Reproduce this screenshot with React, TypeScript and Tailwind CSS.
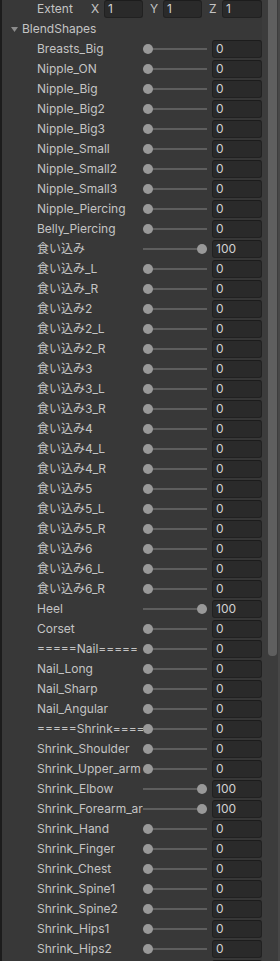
const shapes: [string, number][] = [
  ["Breasts_Big", 0],
  ["Nipple_ON", 0],
  ["Nipple_Big", 0],
  ["Nipple_Big2", 0],
  ["Nipple_Big3", 0],
  ["Nipple_Small", 0],
  ["Nipple_Small2", 0],
  ["Nipple_Small3", 0],
  ["Nipple_Piercing", 0],
  ["Belly_Piercing", 0],
  ["食い込み", 100],
  ["食い込み_L", 0],
  ["食い込み_R", 0],
  ["食い込み2", 0],
  ["食い込み2_L", 0],
  ["食い込み2_R", 0],
  ["食い込み3", 0],
  ["食い込み3_L", 0],
  ["食い込み3_R", 0],
  ["食い込み4", 0],
  ["食い込み4_L", 0],
  ["食い込み4_R", 0],
  ["食い込み5", 0],
  ["食い込み5_L", 0],
  ["食い込み5_R", 0],
  ["食い込み6", 0],
  ["食い込み6_L", 0],
  ["食い込み6_R", 0],
  ["Heel", 100],
  ["Corset", 0],
  ["=====Nail=====", 0],
  ["Nail_Long", 0],
  ["Nail_Sharp", 0],
  ["Nail_Angular", 0],
  ["=====Shrink=====", 0],
  ["Shrink_Shoulder", 0],
  ["Shrink_Upper_arm", 0],
  ["Shrink_Elbow", 100],
  ["Shrink_Forearm_ar", 100],
  ["Shrink_Hand", 0],
  ["Shrink_Finger", 0],
  ["Shrink_Chest", 0],
  ["Shrink_Spine1", 0],
  ["Shrink_Spine2", 0],
  ["Shrink_Hips1", 0],
  ["Shrink_Hips2", 0],
];

const font = { fontFamily: "Inter, 'Noto Sans CJK JP', sans-serif" };

function Field({ value, className }: { value: string; className: string }) {
  return (
    <div
      className={`h-[18px] rounded-[3px] bg-[#2a2a2a] border border-[#212121] border-t-[#1c1c1c] pl-[3px] text-[12px] leading-[16px] text-[#d2d2d2] overflow-hidden ${className}`}
    >
      {value}
    </div>
  );
}

function ShapeRow({ name, value }: { name: string; value: number }) {
  return (
    <div className="flex items-center h-[20px] shrink-0">
      <div className="w-[141px] pl-[35px] pr-[2px] text-[12px] text-[#c4c4c4] whitespace-nowrap overflow-hidden">
        {name}
      </div>
      <div className="relative w-[64px] h-[20px]">
        <div className="absolute left-0 right-0 top-[9px] h-[2px] bg-[#5e5e5e]" />
        <div
          className="absolute top-[5px] w-[10px] h-[10px] rounded-full bg-[#999999]"
          style={{ left: `${(value / 100) * 54}px` }}
        />
      </div>
      <Field value={String(value)} className="ml-[5px] w-[50px]" />
    </div>
  );
}

export default function App() {
  return (
    <div className="w-[280px] h-[961px] overflow-hidden flex bg-[#383838]" style={font}>
      <div className="w-[262px] border-l-2 border-[#1c1c1c] flex flex-col">
        <div className="flex items-center h-[20px] -mt-[1px] shrink-0 text-[12px] text-[#c4c4c4]">
          <div className="w-[89px] pl-[35px]">Extent</div>
          <div className="w-[13px]">X</div>
          <Field value="1" className="w-[39px]" />
          <div className="w-[13px] ml-[7px]">Y</div>
          <Field value="1" className="w-[39px]" />
          <div className="w-[13px] ml-[7px]">Z</div>
          <Field value="1" className="w-[40px]" />
        </div>
        <div className="flex items-center h-[20px] shrink-0 text-[12px] text-[#c4c4c4]">
          <svg width="7" height="5" viewBox="0 0 7 5" className="ml-[9px] mr-[4px]">
            <path d="M0 0 H7 L3.5 5 Z" fill="#8c8c8c" />
          </svg>
          <span>BlendShapes</span>
        </div>
        {shapes.map(([n, v]) => (
          <ShapeRow key={n} name={n} value={v} />
        ))}
        <div className="flex h-[20px] shrink-0 pt-[1px]">
          <Field value="" className="ml-[210px] w-[50px]" />
        </div>
      </div>
      <div className="w-[18px] flex bg-[#3c3c3c]">
        <div className="ml-[6px] w-[9px] h-[656px] rounded-b-[4px] bg-[#5f5f5f]" />
        <div className="ml-auto w-[2px] bg-[#474747]" />
      </div>
    </div>
  );
}
